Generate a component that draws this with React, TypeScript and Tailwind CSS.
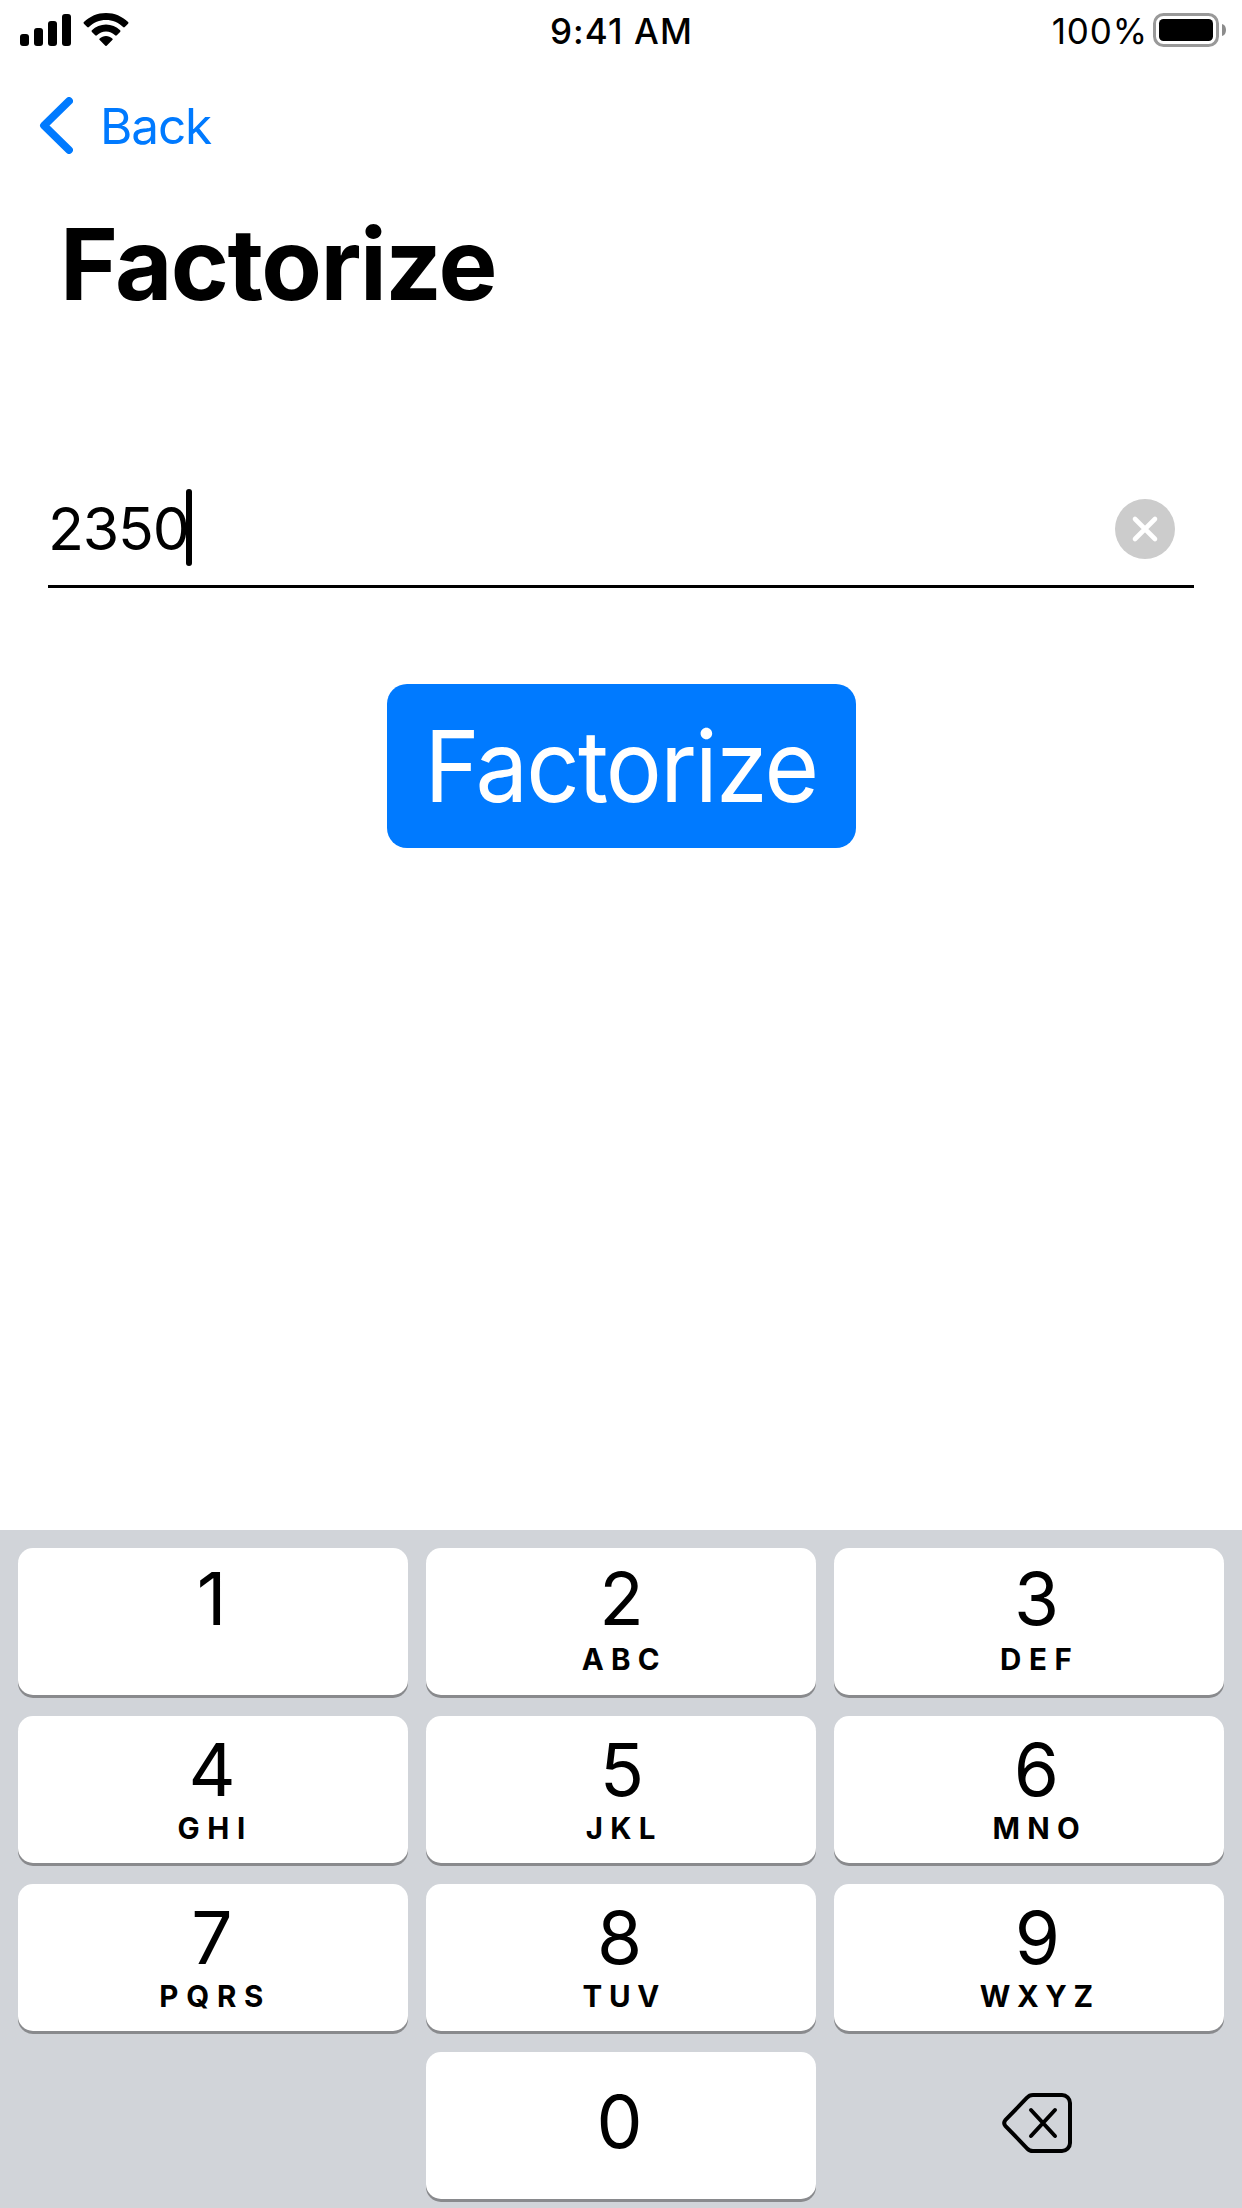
type KeyDef = { digit: string; letters?: string; tracking?: string; nudge?: string };

const rows: KeyDef[][] = [
  [
    { digit: "1", nudge: "-translate-x-[0.5px]" },
    { digit: "2", letters: "ABC", tracking: "tracking-[7.2px]", nudge: "translate-x-[0.5px]" },
    { digit: "3", letters: "DEF", tracking: "tracking-[7.6px]" },
  ],
  [
    { digit: "4", letters: "GHI", tracking: "tracking-[7.6px]" },
    { digit: "5", letters: "JKL", tracking: "tracking-[7.3px]", nudge: "translate-x-px" },
    { digit: "6", letters: "MNO", tracking: "tracking-[7.2px]" },
  ],
  [
    { digit: "7", letters: "PQRS", tracking: "tracking-[7.8px]" },
    { digit: "8", letters: "TUV", tracking: "tracking-[6.7px]", nudge: "-translate-x-[1.5px]" },
    { digit: "9", letters: "WXYZ", tracking: "tracking-[6.6px]", nudge: "translate-x-px" },
  ],
];

const columnShift = ["pr-[2px]", "", "pl-[15px]"];

function Key({ def, column, first }: { def: KeyDef; column: number; first: boolean }) {
  return (
    <button
      className={`flex h-[147px] w-[390px] flex-col items-center rounded-[15px] bg-white shadow-[0_3px_0_#898a8d] ${columnShift[column]} ${first ? "pt-[10px]" : "pt-[13px]"}`}
    >
      <span className={`text-[73px] leading-[81px] ${def.nudge ?? ""}`}>{def.digit}</span>
      {def.letters && (
        <span
          className={`pl-[6.5px] text-[29.5px] leading-[36px] font-[650] ${first ? "mt-[2px]" : ""} ${def.tracking ?? ""}`}
        >
          {def.letters}
        </span>
      )}
    </button>
  );
}

function StatusBar() {
  return (
    <header className="grid h-[62px] grid-cols-[1fr_auto_1fr] items-center text-[35px] leading-[62px]">
      <div className="flex items-start pl-5">
        <svg width="51" height="32" viewBox="0 0 51 32" className="-mt-[2px]">
          <rect x="0" y="20" width="9" height="12" rx="3" />
          <rect x="14" y="14" width="9" height="18" rx="3" />
          <rect x="28" y="7" width="9" height="25" rx="3" />
          <rect x="42" y="0" width="9" height="32" rx="3" />
        </svg>
        <svg width="46" height="33" viewBox="0 0 46 33" className="-mt-[3px] ml-3">
          <path d="M.9 10.700a1.200 1.200 0 0 1 0-1.700C6.900 3.300 14.500 0 23 0s16.100 3.300 22.100 9a1.200 1.200 0 0 1 0 1.700l-3.300 3.300a1.200 1.200 0 0 1-1.700 0C35.500 9.600 29.500 7 23 7S10.500 9.600 5.900 14a1.200 1.200 0 0 1-1.700 0z" />
          <path d="M8.900 19a1.200 1.200 0 0 1 0-1.700C12.700 13.700 17.600 11.500 23 11.500s10.300 2.200 14.100 5.800a1.200 1.200 0 0 1 0 1.700l-3.300 3.300a1.200 1.200 0 0 1-1.700 0C29.600 20 26.500 18.500 23 18.500s-6.600 1.500-9.100 3.800a1.200 1.200 0 0 1-1.700 0z" />
          <path d="M16.700 27.100a1.200 1.200 0 0 1 0-1.700C18.400 23.900 20.600 23 23 23s4.600.900 6.300 2.400a1.200 1.200 0 0 1 0 1.700l-5.400 5.500a1.300 1.300 0 0 1-1.800 0z" />
        </svg>
      </div>
      <span className="pl-[1px] font-[550] tracking-[1.1px]">9:41 AM</span>
      <div className="flex items-center justify-end pr-4">
        <span className="mr-[5px] tracking-[0.9px]">100%</span>
        <svg width="73" height="34" viewBox="0 0 73 34" className="-mt-[2px]">
          <rect x="1.500" y="1.500" width="63" height="31" rx="9" fill="none" stroke="#999" strokeWidth="3" />
          <rect x="6" y="6" width="54" height="22" rx="4.500" />
          <path d="M69 11c2.600.600 4 3 4 6s-1.400 5.400-4 6z" fill="#8c8c8c" />
        </svg>
      </div>
    </header>
  );
}

export default function App() {
  return (
    <div className="flex h-[2208px] w-[1242px] flex-col overflow-hidden bg-white font-[Inter,sans-serif] text-black">
      <StatusBar />

      <nav className="flex h-[128px] items-center pl-[39px] text-[#007aff]">
        <svg width="34" height="57" viewBox="0 0 34 57" fill="none" stroke="currentColor" strokeWidth="7.800" strokeLinecap="round" strokeLinejoin="round" className="-mt-px">
          <path d="M30 4 5 28.500 30 53" />
        </svg>
        <span className="ml-[27px] text-[49.5px] leading-[128px] tracking-[-1.15px]">Back</span>
      </nav>

      <h1 className="mt-[14px] pl-[60px] text-[99px] leading-[120px] font-bold tracking-[-1.55px]">Factorize</h1>

      <div className="mx-[48px] mt-[165px] flex h-[99px] items-start border-b-[3px] border-black">
        <div className="flex h-[77px] flex-1 items-center">
          <span className="pt-[1px] text-[59px] leading-[77px] tracking-[-1.2px]">2350</span>
          <span className="-ml-[3px] h-[77px] w-[6px] rounded-full bg-black" />
        </div>
        <svg width="60" height="60" viewBox="0 0 60 60" className="mt-[10px] mr-[19px]">
          <circle cx="30" cy="30" r="30" fill="#ccc" />
          <path d="m20 20 20 20M40 20 20 40" stroke="#fff" strokeWidth="4.600" strokeLinecap="round" />
        </svg>
      </div>

      <button className="mt-[96px] flex h-[164px] w-[469px] items-center justify-center self-center rounded-[20px] bg-[#007aff] text-white">
        <span className="scale-x-[0.945] text-[99px] leading-[164px] tracking-[-1.9px]">Factorize</span>
      </button>

      <main className="mt-auto flex h-[678px] flex-col gap-[21px] bg-[#d1d4d9] px-[18px] pt-[18px]">
        {rows.map((row, r) => (
          <div key={r} className="flex gap-[18px]">
            {row.map((def, c) => (
              <Key key={def.digit} def={def} column={c} first={r === 0} />
            ))}
          </div>
        ))}
        <div className="flex gap-[18px]">
          <div className="w-[390px]" />
          <button className="flex h-[147px] w-[390px] justify-center rounded-[15px] bg-white pt-[29px] shadow-[0_3px_0_#898a8d]">
            <span className="-translate-x-[1.5px] text-[73px] leading-[81px]">0</span>
          </button>
          <button className="flex h-[147px] w-[390px] justify-center pt-[41px] pl-[15px]">
            <svg width="70" height="60" viewBox="0 0 70 60" fill="none" stroke="#000" strokeWidth="4" strokeLinecap="round" strokeLinejoin="round">
              <path d="M31 2H60a8 8 0 0 1 8 8V50a8 8 0 0 1-8 8H31a8 8 0 0 1-6-2.700L3.300 32.800a4.500 4.500 0 0 1 0-5.600L25 4.700A8 8 0 0 1 31 2z" />
              <path d="m29 17 24 26M53 17 29 43" />
            </svg>
          </button>
        </div>
      </main>
    </div>
  );
}
